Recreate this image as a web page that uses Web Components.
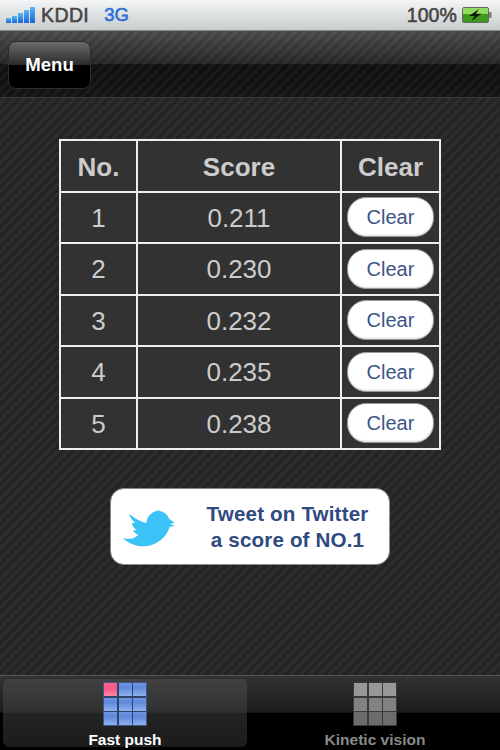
<!DOCTYPE html>
<html><head><meta charset="utf-8">
<style>
html,body{margin:0;padding:0;background:#000}
body{font-family:"Liberation Sans",Arial,sans-serif}
</style></head><body>
<app-shell>
  <status-bar></status-bar>
  <nav-bar>Menu</nav-bar>
  <main-area>
    <score-table>
      <score-row no="1" score="0.211"></score-row>
      <score-row no="2" score="0.230"></score-row>
      <score-row no="3" score="0.232"></score-row>
      <score-row no="4" score="0.235"></score-row>
      <score-row no="5" score="0.238"></score-row>
    </score-table>
    <tweet-button>Tweet on Twitter<br>a score of NO.1</tweet-button>
  </main-area>
  <tab-bar>
    <tab-item active label="Fast push"></tab-item>
    <tab-item label="Kinetic vision"></tab-item>
  </tab-bar>
</app-shell>
<script>
function def(name, html){
  customElements.define(name, class extends HTMLElement{
    constructor(){super();this.attachShadow({mode:'open'});}
    connectedCallback(){ this.shadowRoot.innerHTML=typeof html==='function'?html(this):html; }
  });
}
const stripes='repeating-linear-gradient(-45deg,rgba(255,255,255,.03) 0 3.5px,rgba(0,0,0,.05) 3.5px 7px)';
def('app-shell',`<style>:host{display:flex;flex-direction:column;width:500px;height:750px;overflow:hidden;font-family:"Liberation Sans",Arial,sans-serif}</style><slot></slot>`);

def('status-bar',`<style>
:host{display:flex;align-items:center;height:30px;flex:none;box-sizing:border-box;padding:0 8px 0 6px;background:linear-gradient(#f3f5f6,#c9cccd);color:#454545;font-size:19.5px;-webkit-text-stroke:.55px #454545}
.sig{display:flex;align-items:flex-end;gap:1px;height:17px;width:30px;margin-top:-1px}
.sig i{display:block;width:5px;background:linear-gradient(#5cb4f8,#1768d4)}
.k{margin-left:5px;letter-spacing:.4px}
.g{margin-left:15px;color:#2a70d8;font-size:18.5px;-webkit-text-stroke:.55px #2a70d8}
.sp{flex:1}
.p{letter-spacing:.1px}
svg{margin-left:5px}
</style>
<div class="sig"><i style="height:5px"></i><i style="height:7px"></i><i style="height:10px"></i><i style="height:13px"></i><i style="height:16px"></i></div>
<span class="k">KDDI</span><span class="g">3G</span><span class="sp"></span><span class="p">100%</span>
<svg width="30" height="17" viewBox="0 0 30 17"><rect x=".5" y=".5" width="26" height="15" rx="1.5" fill="#3f9a1c" stroke="#666"/><rect x="1" y="1" width="25" height="6" fill="#8fdc60"/><rect x="27" y="5" width="2.5" height="6" rx="1" fill="#777"/><path d="M17 2 L7 9 L12.5 9 L9.5 14 L19.5 6.8 L14 6.8 Z" fill="#0e1a08"/></svg>`);

def('nav-bar',`<style>
:host{display:flex;align-items:center;height:68px;flex:none;box-sizing:border-box;padding:0 0 0 8px;border-top:1px solid #8a8a8a;border-bottom:1px solid #3a3a3a;background:${stripes},linear-gradient(#4b4b4b 0,#272727 50%,#101010 51%,#151515 100%)}
.b{box-sizing:border-box;width:83px;height:48px;border-radius:8px;margin-top:2px;display:flex;align-items:center;justify-content:center;color:#fff;font-weight:700;font-size:18.6px;border:1px solid #2e2e2e;background:linear-gradient(#6a6a6a 0,#2b2b2b 50%,#000 51%,#000 100%)}
</style><div class="b"><slot></slot></div>`);

def('main-area',`<style>
:host{display:flex;flex-direction:column;align-items:center;flex:1;min-height:0;padding-top:41px;box-sizing:border-box;background:repeating-linear-gradient(-45deg,#2c2c2c 0 3.5px,#242424 3.5px 7px)}
</style><slot></slot>`);

def('score-table',`<style>
:host{display:grid;grid-template-columns:75px 202px 97px;grid-auto-rows:49.5px;gap:2px;padding:2px;background:#eee;width:382px;box-sizing:border-box;height:311px}
.h{background:#323232;color:#ccc;font-weight:700;font-size:26px;display:flex;align-items:center;justify-content:center;padding-top:3px;box-sizing:border-box}
</style><div class="h">No.</div><div class="h">Score</div><div class="h">Clear</div><slot></slot>`);

def('score-row',(e)=>`<style>
:host{display:contents}
.c{background:#323232;color:#ccc;font-size:26px;display:flex;align-items:center;justify-content:center;padding-top:2px;box-sizing:border-box}
.x{padding-top:0}
.b{box-sizing:border-box;width:87px;height:40px;border-radius:19px;background:#fff;border:1.5px solid #9a9a9a;box-shadow:inset 0 -1px 2px #ddd;color:#3b5488;font-size:20px;padding-top:1px;display:flex;align-items:center;justify-content:center}
</style><div class="c">${e.getAttribute('no')||''}</div><div class="c">${e.getAttribute('score')||''}</div><div class="c x"><div class="b">Clear</div></div>`);

def('tweet-button',`<style>
:host{display:flex;align-items:center;box-sizing:border-box;width:280px;height:77px;margin-top:38px;border-radius:14px;background:#fff;border:1.5px solid #8a8a8a;padding-left:9px}
svg{flex:none;margin-top:3px}
.t{flex:1;text-align:center;color:#2f4a80;font-weight:700;font-size:20.6px;line-height:25.5px;padding-left:14px;padding-right:6px;letter-spacing:.15px}
</style>
<svg width="58" height="40" viewBox="60 80 175 120"><path fill="#3bc3f7" d="M68 170C84 176 104 172 116 160C106 158 100 152 100 146C104 147 108 147 110 146C100 140 96 130 96 124C100 125 103 125 105 124C95 116 90 107 88 98C105 112 122 122 140 125C140 108 152 92 175 87L186 90C197 94 205 102 208 112L225 124L212 127L225 134L210 136C200 172 165 195 130 195C105 195 85 185 68 170Z"/></svg>
<div class="t"><slot></slot></div>`);

def('tab-bar',`<style>
:host{display:flex;height:75px;flex:none;box-sizing:border-box;padding:3px 0 4px;border-top:1.5px solid #555;background:linear-gradient(#333 0,#1c1c1c 49%,#000 50%,#000 100%)}
</style><slot></slot>`);

def('tab-item',(e)=>{
  const a=e.hasAttribute('active');
  const cell=(i)=>{
    let bg;
    if(a) bg=i==0?'linear-gradient(#ff5e8e 0,#fa5c8a 50%,#ff86aa 100%)':'linear-gradient(#6f97e4 0,#5f88da 35%,#8eb2f0 100%)';
    else bg=i<3?'#989898':i<6?'#828282':'#6c6c6c';
    return `<i style="background:${bg}"></i>`;
  };
  return `<style>
:host{flex:none;width:${a?244:250}px;margin:0 ${a?3:0}px;display:flex;flex-direction:column;align-items:center;box-sizing:border-box;height:68px;padding-top:4px;border-radius:6px;color:${a?'#fff':'#8a8a8a'};font-weight:700;font-size:15.5px;${a?'background:linear-gradient(#414141 0,#303030 49%,#232323 50%,#1c1c1c 100%);':''}}
.g{display:grid;grid-template-columns:repeat(3,13px);grid-auto-rows:13px;gap:1.5px;background:${a?'#2f4568':'#3a3a3a'};outline:1px solid ${a?'#3f5680':'#3a3a3a'}}
i{display:block}
.l{margin-top:6px;line-height:18px}
</style><div class="g">${[0,1,2,3,4,5,6,7,8].map(cell).join('')}</div><div class="l">${e.getAttribute('label')||''}</div>`;
});
</script>
</body></html>
